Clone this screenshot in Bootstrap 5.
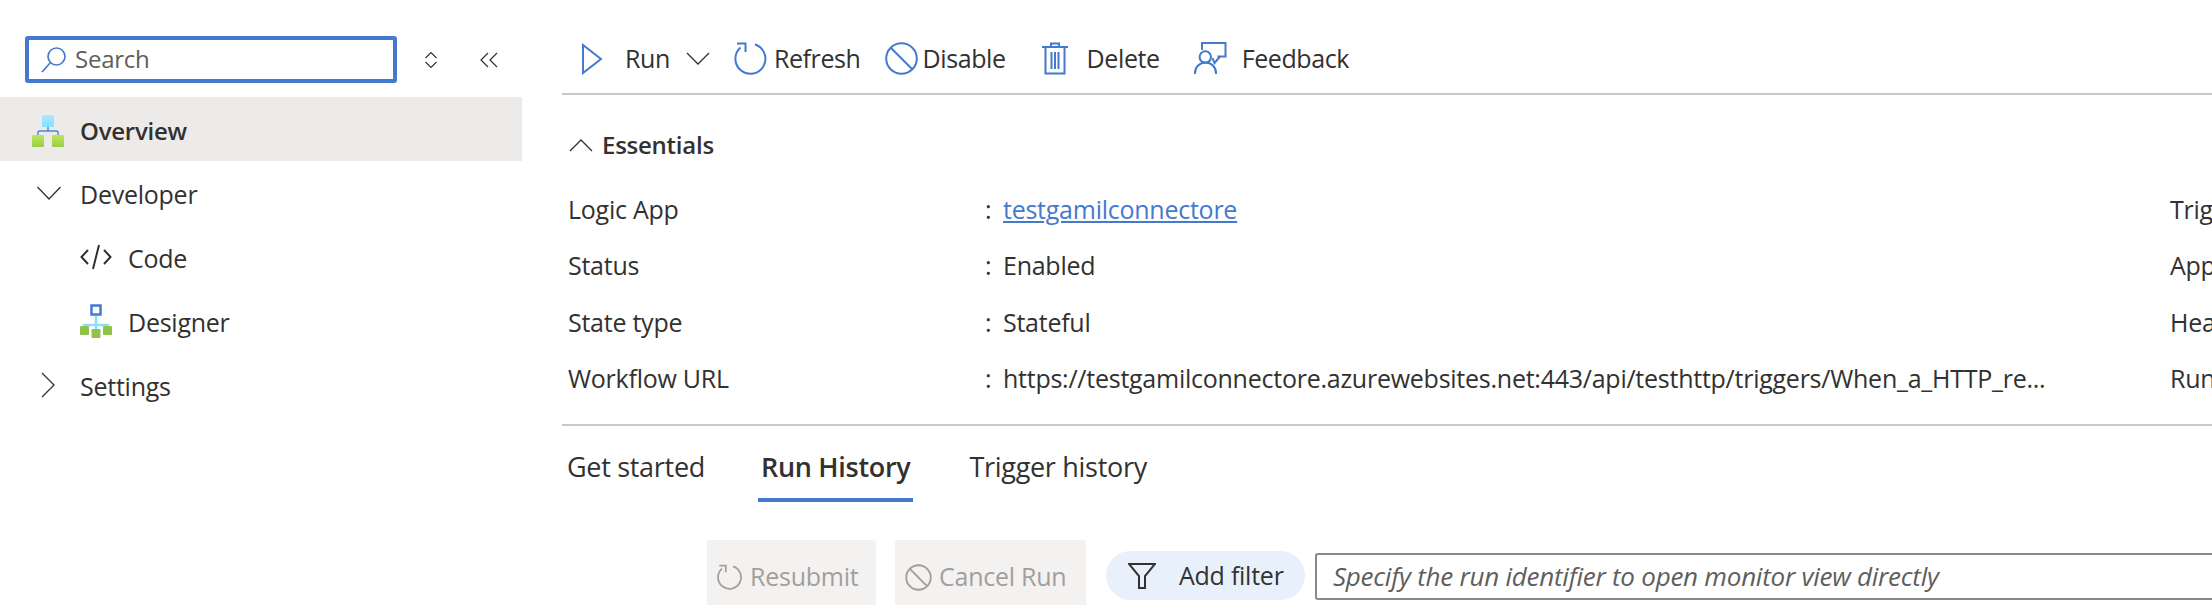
<!doctype html>
<html lang="en">
<head>
<meta charset="utf-8">
<title>Workflow overview</title>
<link href="https://cdn.jsdelivr.net/npm/bootstrap@5.3.0/dist/css/bootstrap.min.css" rel="stylesheet">
<style>
html,body{height:605px;overflow:hidden;background:#fff}
body{font-family:"Open Sans","Noto Sans",sans-serif;font-size:25px;color:#323130;letter-spacing:-.25px}
svg{flex:none;display:block}
.shell{height:605px;width:2212px}
.side{width:522px;flex:none;padding-top:36px}
.searchrow{height:47px;margin-bottom:14px;padding-left:25px}
.searchbox{width:372px;height:47px;border:4px solid #4479cf;border-radius:3px;padding-left:12px;gap:8px;color:#605e5c;font-size:24px}
.searchbox span{padding-bottom:2px}
.siderow{height:64px;padding-left:32px;gap:14px}
.siderow span{padding-top:3px}
.siderow.on{background:#edebe9;font-weight:600;font-size:24px;gap:16px}
.siderow.on svg{margin-top:4px}
.siderow.sub{padding-left:80px;gap:16px}
.mainp{min-width:0;overflow:hidden;margin-left:40px}
.tools{height:95px;padding-top:24px;border-bottom:2px solid #c8c8c8;padding-left:19px;letter-spacing:-.4px}
.essh{height:86px;padding:14px 0 0 7px;gap:9px;font-weight:600;font-size:24px}
.gridrow{height:56.5px;padding-left:6px}
.lab{width:417px;flex:none;display:block}
.colon{width:18px;flex:none}
.val{width:1167px;flex:none;white-space:nowrap}
.val a{color:#4479cf}
.rule{border-top:2px solid #c8c8c8;margin-top:17px}
.tabsrow{height:75px;padding-left:5px;font-size:27px;letter-spacing:-.3px}
.tabitem{position:relative;height:75px;display:flex;align-items:center;padding-top:8px}
.tabitem.on{font-weight:600}
.tabitem.on::after{content:"";position:absolute;left:-3px;right:-3px;top:72px;height:4px;background:#4479cf}
.barf{padding-left:145px;height:70px;margin-top:39px}
.disb{height:70px;background:#f3f2f1;color:#a19f9d;border-radius:3px;gap:7px;padding:4px 0 0 10px}
.pill{height:49px;background:#e8f1fb;border-radius:25px;gap:23px;margin-top:11px;padding-left:22px}
.runid{height:47px;margin-top:13px;flex:1;border:2px solid #8a8886;border-right:0;border-radius:3px 0 0 3px;font-style:italic;color:#605e5c;padding-left:16px;white-space:nowrap;font-size:26px}
</style>
</head>
<body>
<div class="shell d-flex">
  <aside class="side">
    <div class="searchrow d-flex align-items-center">
      <div class="searchbox d-flex align-items-center">
        <svg width="26" height="28" viewBox="0 0 26 28" fill="none" stroke="#4479cf" stroke-width="1.7"><circle cx="15.5" cy="10.5" r="8.5"/><path d="M9.5 16.5 1 26"/></svg>
        <span>Search</span>
      </div>
      <svg style="margin-left:27px" width="14" height="18" viewBox="0 0 14 18" fill="none" stroke="#323130" stroke-width="1.1"><path d="M1.5 7 7 1.5 12.500 7M1.500 11 7 16.500 12.500 11"/></svg>
      <svg style="margin-left:42px" width="18" height="16" viewBox="0 0 18 16" fill="none" stroke="#323130" stroke-width="1.200"><path d="M8 1 1 8l7 7M17 1l-7 7 7 7"/></svg>
    </div>
    <div class="siderow on d-flex align-items-center">
      <svg width="32" height="32" viewBox="0 0 32 32"><defs><linearGradient id="gr" x1="0" y1="0" x2="0" y2="1"><stop offset="0" stop-color="#bce75c"/><stop offset="1" stop-color="#9dcc46"/></linearGradient><linearGradient id="cy" x1="0" y1="0" x2="0" y2="1"><stop offset="0" stop-color="#a8eaff"/><stop offset="1" stop-color="#86dfff"/></linearGradient></defs><path d="M16 12v4M6 20v-2.500q0-1.500 1.500-1.500h17q1.500 0 1.500 1.500V20" fill="none" stroke="#4e86d8" stroke-width="1.500"/><rect x="10" y="0" width="12" height="12" rx="1" fill="url(#cy)"/><rect x="0" y="20" width="12" height="12" rx="1" fill="url(#gr)"/><rect x="20" y="20" width="12" height="12" rx="1" fill="url(#gr)"/></svg>
      <span>Overview</span>
    </div>
    <div class="siderow d-flex align-items-center">
      <svg width="34" height="20" viewBox="0 0 34 20" fill="none" stroke="#323130" stroke-width="1.300"><path d="M5.500 4 17 16 28.500 4"/></svg>
      <span>Developer</span>
    </div>
    <div class="siderow sub d-flex align-items-center">
      <svg width="32" height="26" viewBox="0 0 32 26" fill="none" stroke="#323130" stroke-width="2"><path d="M8 6 1.500 13 8 20M24 6l6.500 7L24 20M19 1l-6 24"/></svg>
      <span>Code</span>
    </div>
    <div class="siderow sub d-flex align-items-center">
      <svg width="32" height="34" viewBox="0 0 32 34"><path d="M16 12v14M4 26v-5h24v5" fill="none" stroke="#8ae0fb" stroke-width="2.400"/><rect x="11.500" y="1.500" width="9" height="9" fill="#fff" stroke="#4479cf" stroke-width="2.500"/><rect x="0" y="22" width="9" height="9" rx="1" fill="#8fc34a"/><rect x="11.500" y="25" width="9" height="9" rx="1" fill="#8fc34a"/><rect x="23" y="22" width="9" height="9" rx="1" fill="#8fc34a"/></svg>
      <span>Designer</span>
    </div>
    <div class="siderow d-flex align-items-center">
      <svg width="34" height="26" viewBox="0 0 34 26" fill="none" stroke="#323130" stroke-width="1.300"><path d="m10 1 12 12L10 25"/></svg>
      <span>Settings</span>
    </div>
  </aside>
  <main class="mainp flex-grow-1">
    <div class="tools d-flex align-items-center">
      <svg width="22" height="32" viewBox="0 0 22 32" fill="none" stroke="#4479cf" stroke-width="2"><path d="M2 2 20 16 2 30Z"/></svg>
      <span style="margin-left:22px">Run</span>
      <svg style="margin-left:16px" width="24" height="14" viewBox="0 0 24 14" fill="none" stroke="#323130" stroke-width="1.300"><path d="m1 1 11 11L23 1"/></svg>
      <svg style="margin-left:24px" width="34" height="34" viewBox="0 0 34 34" fill="none" stroke="#4479cf" stroke-width="2"><path d="M6.500 5.500A15 15 0 1 0 21 2.500"/><path d="M3 1.500h8.500V10"/></svg>
      <span style="margin-left:6px">Refresh</span>
      <svg style="margin-left:24px" width="33" height="33" viewBox="0 0 33 33" fill="none" stroke="#4479cf" stroke-width="2"><circle cx="16.500" cy="16.500" r="15.300"/><path d="m6 6 21 21"/></svg>
      <span style="margin-left:5px">Disable</span>
      <svg style="margin-left:36px" width="26" height="33" viewBox="0 0 26 33" fill="none" stroke="#4479cf" stroke-width="2"><path d="M0 5h26M9 5V1.500h8V5M3.500 5v26.500h19V5M9.500 10v17M13 10v17M16.500 10v17"/></svg>
      <span style="margin-left:19px">Delete</span>
      <svg style="margin-left:34px" width="33" height="33" viewBox="0 0 33 33" fill="none" stroke="#4479cf" stroke-width="2"><path d="M8 8V1h23.500v13.500h-8"/><path d="M26 14.500 20.500 21l-2-5"/><circle cx="11.300" cy="15" r="5.700"/><path d="M1 32v-1a10.500 10.500 0 0 1 21 0v1"/></svg>
      <span style="margin-left:15px">Feedback</span>
    </div>
    <div class="essh d-flex align-items-center">
      <svg width="24" height="14" viewBox="0 0 24 14" fill="none" stroke="#323130" stroke-width="1.300"><path d="M1 13 12 2l11 11"/></svg>
      <span>Essentials</span>
    </div>
    <div class="gridrow d-flex align-items-center"><span class="lab">Logic App</span><span class="colon">:</span><span class="val"><a href="#">testgamilconnectore</a></span><span>Trigger</span></div>
    <div class="gridrow d-flex align-items-center"><span class="lab">Status</span><span class="colon">:</span><span class="val">Enabled</span><span>App</span></div>
    <div class="gridrow d-flex align-items-center"><span class="lab">State type</span><span class="colon">:</span><span class="val">Stateful</span><span>Health</span></div>
    <div class="gridrow d-flex align-items-center"><span class="lab">Workflow URL</span><span class="colon">:</span><span class="val">https://testgamilconnectore.azurewebsites.net:443/api/testhttp/triggers/When_a_HTTP_re...</span><span>Runs</span></div>
    <div class="rule"></div>
    <div class="tabsrow d-flex">
      <div class="tabitem">Get started</div>
      <div class="tabitem on" style="margin-left:56px">Run History</div>
      <div class="tabitem" style="margin-left:59px">Trigger history</div>
    </div>
    <div class="barf d-flex">
      <div class="disb d-flex align-items-center" style="width:169px">
        <svg width="26" height="27" viewBox="0 0 34 34" fill="none" stroke="#a19f9d" stroke-width="2.300"><path d="M6.500 5.500A15 15 0 1 0 21 2.500"/><path d="M3 1.500h8.500V10"/></svg><span>Resubmit</span>
      </div>
      <div class="disb d-flex align-items-center" style="width:191px;margin-left:19px">
        <svg width="27" height="27" viewBox="0 0 33 33" fill="none" stroke="#a19f9d" stroke-width="2.300"><circle cx="16.500" cy="16.500" r="15"/><path d="m6 6 21 21"/></svg><span>Cancel Run</span>
      </div>
      <div class="pill d-flex align-items-center" style="width:199px;margin-left:20px">
        <svg width="28" height="26" viewBox="0 0 28 26" fill="none" stroke="#323130" stroke-width="2"><path d="M1 1h26L17 13v12h-6V13Z"/></svg><span>Add filter</span>
      </div>
      <div class="runid d-flex align-items-center" style="margin-left:10px">Specify the run identifier to open monitor view directly</div>
    </div>
  </main>
</div>
<script src="https://cdn.jsdelivr.net/npm/bootstrap@5.3.0/dist/js/bootstrap.bundle.min.js"></script>
</body>
</html>
